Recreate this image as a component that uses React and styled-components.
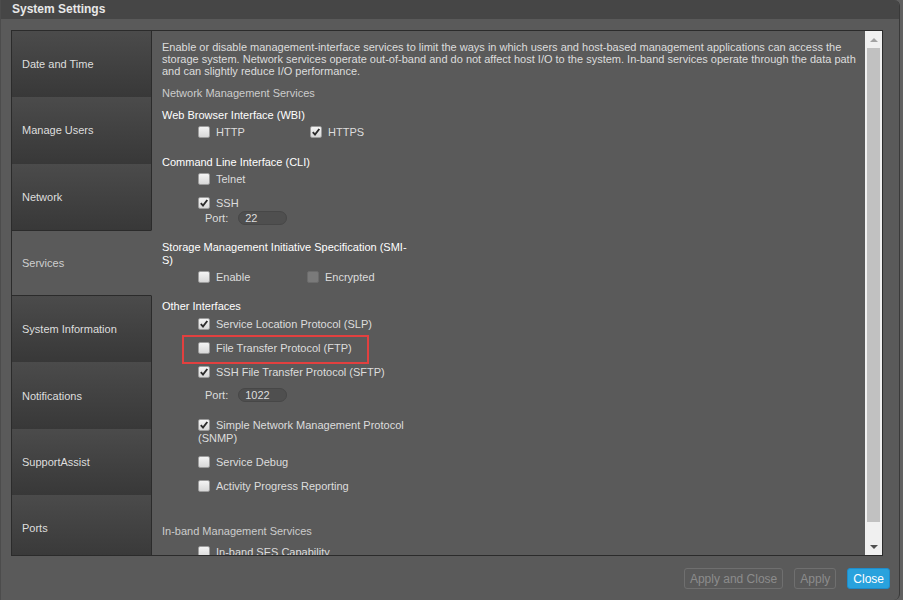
import styled, { createGlobalStyle } from 'styled-components';

const GlobalStyle = createGlobalStyle`
  html, body {
    margin: 0;
    padding: 0;
    background: #606060;
  }
  body {
    font-family: "Liberation Sans", Arial, sans-serif;
  }
  * {
    box-sizing: border-box;
  }
`;

const tabs = [
  'Date and Time',
  'Manage Users',
  'Network',
  'Services',
  'System Information',
  'Notifications',
  'SupportAssist',
  'Ports',
];

const Window = styled.div`
  width: 900px;
  height: 600px;
  display: flex;
  flex-direction: column;
  background: #5a5a5a;
  border-left: 1px solid #4c4c4c;
  border-right: 1px solid #393939;
  border-radius: 0 6px 6px 0;
  overflow: hidden;
`;

const TitleBar = styled.div`
  height: 19px;
  line-height: 19px;
  padding-left: 11px;
  background: #464646;
  color: #e8e8e8;
  font-size: 12px;
  font-weight: bold;
  flex-shrink: 0;
`;

const Body = styled.div`
  padding: 11px 9px 0 10px;
`;

const Panel = styled.div`
  width: 872px;
  height: 526px;
  display: flex;
  border: 1px solid #2b2b2b;
  overflow: hidden;
`;

const Sidebar = styled.nav`
  width: 140px;
  flex-shrink: 0;
  display: flex;
  flex-direction: column;
  overflow: hidden;
`;

const Tab = styled.div`
  height: 66.3px;
  flex-shrink: 0;
  display: flex;
  align-items: center;
  padding-left: 10px;
  font-size: 11px;
  color: ${(p) => (p.$active ? '#cfcfcf' : '#dedede')};
  background: ${(p) => (p.$active ? '#5a5a5a' : 'linear-gradient(#4b4b4b, #383838)')};
  border-right: 1px solid ${(p) => (p.$active ? '#5a5a5a' : '#2b2b2b')};
  border-top: ${(p) => (p.$active ? '1px solid #2b2b2b' : 'none')};
  border-bottom: ${(p) => (p.$active ? '1px solid #2b2b2b' : 'none')};
`;

const Content = styled.div`
  flex: 1;
  padding: 10px 8px 0 10px;
  overflow: hidden;
  font-size: 11px;
  color: #dddddd;
`;

const Intro = styled.p`
  margin: 0;
  line-height: 12px;
`;

const ServiceLabel = styled.div`
  margin-top: ${(p) => p.$top}px;
  line-height: 13px;
  color: #cccccc;
`;

const Group = styled.section`
  width: 250px;
  margin-top: ${(p) => p.$top}px;
`;

const Heading = styled.div`
  line-height: 13px;
  color: #ffffff;
`;

const Items = styled.div`
  display: flex;
  flex-direction: column;
  gap: 11px;
  width: 250px;
  margin-top: ${(p) => p.$top ?? 4}px;
  padding-left: 36px;
`;

const Pair = styled.div`
  display: grid;
  grid-template-columns: ${(p) => p.$col}px auto;
`;

const Item = styled.label`
  position: relative;
  align-self: ${(p) => (p.$fit ? 'flex-start' : 'stretch')};
  line-height: 13px;
  color: #dddddd;
`;

const Box = styled.span`
  display: inline-block;
  vertical-align: top;
  width: 12px;
  height: 12px;
  margin-right: 6px;
  border-radius: 2px;
  border: 1px solid ${(p) => (p.$disabled ? '#6b6b6b' : '#9c9c9c')};
  background: ${(p) => (p.$disabled ? '#7a7a7a' : 'linear-gradient(#f4f4f4, #d8d8d8)')};

  svg {
    display: block;
  }
`;

const Marker = styled.span`
  position: absolute;
  top: -7px;
  bottom: -9px;
  left: -16px;
  right: -17px;
  border: 2px solid #e2403f;
  pointer-events: none;
`;

const PortRow = styled.div`
  display: flex;
  align-items: center;
  gap: 10px;
  margin: ${(p) => (p.$loose ? '9px 0 6px 7px' : '1px 0 0 7px')};
  line-height: 13px;
`;

const PortInput = styled.input`
  width: 49px;
  height: 14px;
  padding: 0 0 0 6px;
  border: 1px solid #474747;
  border-radius: 7px;
  background: #4f4f4f;
  color: #dddddd;
  font: 11px "Liberation Sans", Arial, sans-serif;
  outline: none;
`;

const Scrollbar = styled.div`
  width: 17px;
  flex-shrink: 0;
  display: flex;
  flex-direction: column;
  background: #f0f0f0;
`;

const ArrowButton = styled.div`
  height: 17px;
  display: flex;
  align-items: center;
  justify-content: center;

  &::after {
    content: '';
    border-left: 4px solid transparent;
    border-right: 4px solid transparent;
    ${(p) =>
      p.$down
        ? 'border-top: 4px solid #505050;'
        : 'border-bottom: 4px solid #a3a3a3;'}
  }
`;

const Track = styled.div`
  flex: 1;
  padding: 0 2px;
`;

const Thumb = styled.div`
  height: 474px;
  background: #c1c1c1;
`;

const Footer = styled.div`
  display: flex;
  justify-content: flex-end;
  gap: 11px;
  padding-top: 12px;
`;

const Button = styled.button`
  height: 21px;
  padding: 0 5px;
  border-radius: 3px;
  font: 12px "Liberation Sans", Arial, sans-serif;
  border: 1px solid ${(p) => (p.$primary ? '#1e8ccb' : '#6f6f6f')};
  background: ${(p) => (p.$primary ? '#29a2dd' : 'transparent')};
  color: ${(p) => (p.$primary ? '#ffffff' : '#8c8c8c')};
`;

const Check = ({ checked, disabled, children, ...rest }) => (
  <Item {...rest}>
    <Box $disabled={disabled}>
      {checked && (
        <svg width="10" height="10" viewBox="0 0 10 10">
          <path d="M1.8 5.2 L4 7.6 L8.3 2" fill="none" stroke="#2c2c2c" strokeWidth="1.9" />
        </svg>
      )}
    </Box>
    {children}
  </Item>
);

const Port = ({ value, loose }) => (
  <PortRow $loose={loose}>
    <span>Port:</span>
    <PortInput readOnly defaultValue={value} />
  </PortRow>
);

export default function App() {
  return (
    <>
      <GlobalStyle />
      <Window>
        <TitleBar>System Settings</TitleBar>
        <Body>
          <Panel>
            <Sidebar>
              {tabs.map((t) => (
                <Tab key={t} $active={t === 'Services'}>
                  {t}
                </Tab>
              ))}
            </Sidebar>

            <Content>
              <Intro>
                Enable or disable management-interface services to limit the ways in which users and
                host-based management applications can access the storage system. Network services
                operate out-of-band and do not affect host I/O to the system. In-band services operate
                through the data path and can slightly reduce I/O performance.
              </Intro>

              <ServiceLabel $top={10}>Network Management Services</ServiceLabel>

              <Group $top={9}>
                <Heading>Web Browser Interface (WBI)</Heading>
                <Items>
                  <Pair $col={112}>
                    <Check>HTTP</Check>
                    <Check checked>HTTPS</Check>
                  </Pair>
                </Items>
              </Group>

              <Group $top={17}>
                <Heading>Command Line Interface (CLI)</Heading>
                <Items>
                  <Check>Telnet</Check>
                  <div>
                    <Check checked>SSH</Check>
                    <Port value="22" />
                  </div>
                </Items>
              </Group>

              <Group $top={16}>
                <Heading>Storage Management Initiative Specification (SMI-S)</Heading>
                <Items>
                  <Pair $col={109}>
                    <Check>Enable</Check>
                    <Check disabled>Encrypted</Check>
                  </Pair>
                </Items>
              </Group>

              <Group $top={16}>
                <Heading>Other Interfaces</Heading>
                <Items $top={5}>
                  <Check checked>Service Location Protocol (SLP)</Check>
                  <Check $fit>
                    File Transfer Protocol (FTP)
                    <Marker />
                  </Check>
                  <div>
                    <Check checked>SSH File Transfer Protocol (SFTP)</Check>
                    <Port value="1022" loose />
                  </div>
                  <Check checked>Simple Network Management Protocol (SNMP)</Check>
                  <Check>Service Debug</Check>
                  <Check>Activity Progress Reporting</Check>
                </Items>
              </Group>

              <ServiceLabel $top={32}>In-band Management Services</ServiceLabel>
              <Items $top={8}>
                <Check>In-band SES Capability</Check>
              </Items>
            </Content>

            <Scrollbar>
              <ArrowButton />
              <Track>
                <Thumb />
              </Track>
              <ArrowButton $down />
            </Scrollbar>
          </Panel>

          <Footer>
            <Button disabled>Apply and Close</Button>
            <Button disabled>Apply</Button>
            <Button $primary>Close</Button>
          </Footer>
        </Body>
      </Window>
    </>
  );
}
